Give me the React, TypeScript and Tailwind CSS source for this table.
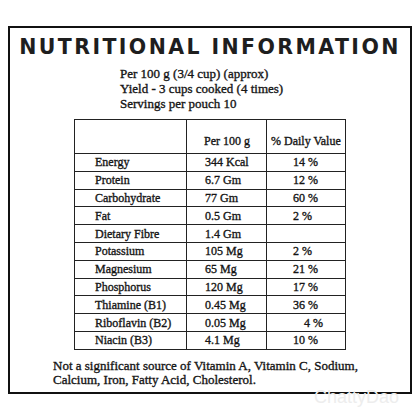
import React from "react";

const rows: [string, string, string, string?][] = [
  ["Energy", "344 Kcal", "14 %"],
  ["Protein", "6.7 Gm", "12 %"],
  ["Carbohydrate", "77 Gm", "60 %"],
  ["Fat", "0.5 Gm", "2 %"],
  ["Dietary Fibre", "1.4 Gm", ""],
  ["Potassium", "105 Mg", "2 %"],
  ["Magnesium", "65 Mg", "21 %"],
  ["Phosphorus", "120 Mg", "17 %"],
  ["Thiamine (B1)", "0.45 Mg", "36 %"],
  ["Riboflavin (B2)", "0.05 Mg", "4 %", "pl-[37px]"],
  ["Niacin (B3)", "4.1 Mg", "10 %"],
];

export default function App() {
  return (
    <div className="relative h-[420px] w-[420px] overflow-hidden bg-white">
      <div className="ml-[8px] mt-[26px] flex h-[368px] w-[404px] flex-col border-2 border-[#111] font-['Liberation_Serif',serif] text-[#161616] [-webkit-text-stroke:0.35px_#161616]">
        <h1 className="whitespace-nowrap pt-[7px] text-center font-['DejaVu_Sans',sans-serif] text-[20.5px] font-bold leading-[24px] tracking-[2.4px] text-[#1e1e1e] [-webkit-text-stroke:0px]">
          NUTRITIONAL INFORMATION
        </h1>

        <div className="mt-[7px] pl-[110px] text-[13px] leading-[15px]">
          <p>Per 100 g (3/4 cup) (approx)</p>
          <p>Yield - 3 cups cooked (4 times)</p>
          <p>Servings per pouch 10</p>
        </div>

        <table className="ml-[64px] mt-[8px] w-[271px] table-fixed border-collapse text-[12px] leading-[14px]">
          <colgroup>
            <col className="w-[112px]" />
            <col className="w-[80px]" />
            <col className="w-[79px]" />
          </colgroup>
          <thead>
            <tr className="h-[34px]">
              <th className="border border-[#222]" />
              <th className="border border-[#222] pb-[5px] pl-[17px] text-left align-bottom font-normal">Per 100 g</th>
              <th className="border border-[#222] pb-[5px] pl-[4px] text-left align-bottom font-normal">% Daily Value</th>
            </tr>
          </thead>
          <tbody>
            {rows.map(([name, amount, dv, pad]) => (
              <tr key={name} className="h-[17.8px]">
                <td className="border border-[#222] pl-[20px]">{name}</td>
                <td className="border border-[#222] pl-[18px]">{amount}</td>
                <td className={"border border-[#222] " + (pad ?? "pl-[26px]")}>{dv}</td>
              </tr>
            ))}
          </tbody>
        </table>

        <div className="mt-[9px] pl-[43px] text-[13px] leading-[14px]">
          <p>Not a significant source of Vitamin A, Vitamin C, Sodium,</p>
          <p>Calcium, Iron, Fatty Acid, Cholesterol.</p>
        </div>
      </div>

      <span className="absolute left-[314px] top-[386px] font-['Liberation_Sans',Arial,sans-serif] text-[18px] leading-[22px] text-[#ededed]">
        ChattyDao
      </span>
    </div>
  );
}
